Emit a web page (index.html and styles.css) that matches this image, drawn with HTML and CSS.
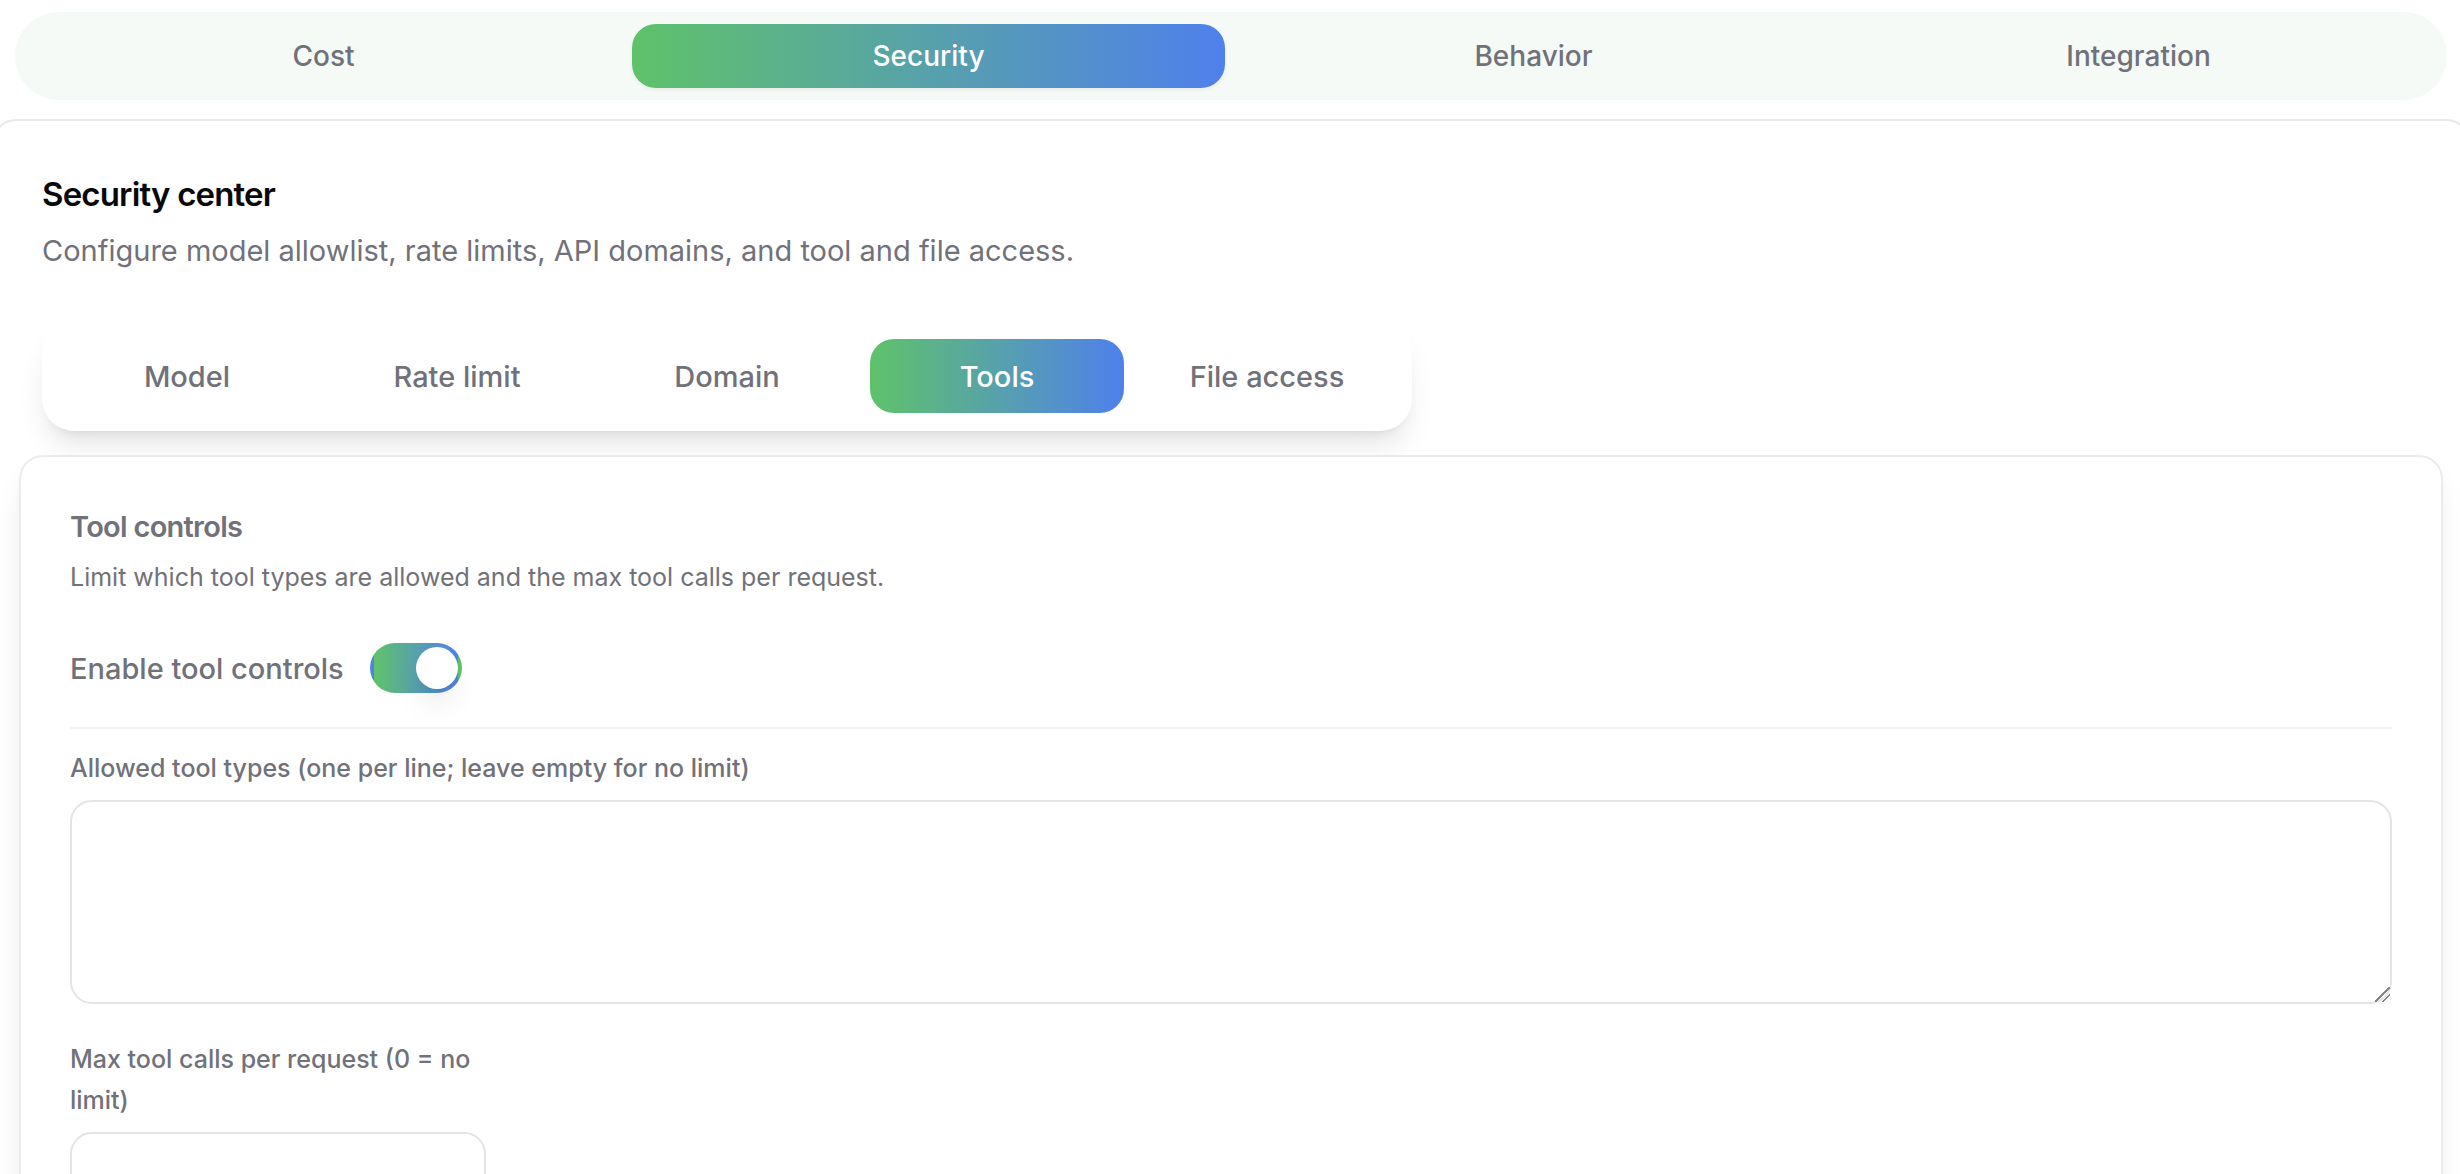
FILE: index.html
```html
<!DOCTYPE html>
<html lang="en">

<head>
    <meta charset="UTF-8">
    <meta name="viewport" content="width=device-width, initial-scale=1.0">
    <title>Settings - Security</title>
    <link rel="stylesheet" href="styles.css">
</head>

<body>
    <!-- Main tabs -->
    <nav class="main-tabs">
        <button type="button" class="tab">Cost</button>
        <button type="button" class="tab active">Security</button>
        <button type="button" class="tab">Behavior</button>
        <button type="button" class="tab">Integration</button>
    </nav>

    <!-- Security center -->
    <main class="panel">
        <header class="panel-header">
            <h1>Security center</h1>
            <p>Configure model allowlist, rate limits, API domains, and tool and file access.</p>
        </header>

        <nav class="sub-tabs">
            <button type="button" class="tab">Model</button>
            <button type="button" class="tab">Rate limit</button>
            <button type="button" class="tab">Domain</button>
            <button type="button" class="tab active">Tools</button>
            <button type="button" class="tab">File access</button>
        </nav>

        <section class="card">
            <h2>Tool controls</h2>
            <p class="card-text">Limit which tool types are allowed and the max tool calls per request.</p>

            <form id="toolControlsForm">
                <div class="switch-row">
                    <label for="enableTools">Enable tool controls</label>
                    <input type="checkbox" id="enableTools" name="enableTools" class="switch" role="switch" checked>
                </div>

                <div class="field">
                    <label for="toolTypes">Allowed tool types (one per line; leave empty for no limit)</label>
                    <textarea id="toolTypes" name="toolTypes"></textarea>
                </div>

                <div class="field field-small">
                    <label for="maxCalls">Max tool calls per request (0 = no limit)</label>
                    <input type="text" id="maxCalls" name="maxCalls" inputmode="numeric">
                </div>
            </form>
        </section>
    </main>
</body>

</html>
```
FILE: styles.css
```css
* {
    box-sizing: border-box;
}

body {
    margin: 0;
    padding-top: 12px;
    font-family: Inter, sans-serif;
    font-size: 29px;
    color: #71717a;
    background-color: #fff;
    overflow-x: hidden;
}

h1,
h2,
p {
    margin: 0;
}

/* Tabs */
.main-tabs {
    display: grid;
    grid-template-columns: repeat(4, 1fr);
    gap: 12px;
    margin: 0 13px 0 15px;
    padding: 12px;
    border-radius: 44px;
    background-color: #f5faf6;
}

.tab {
    height: 64px;
    padding: 0 24px;
    border: none;
    border-radius: 24px;
    background: none;
    color: #71717a;
    font-family: inherit;
    font-size: 28px;
    font-weight: 500;
    cursor: pointer;
}

.tab.active {
    background: linear-gradient(90deg, #5fc26a, #4f80ec);
    color: white;
    box-shadow: 0 2px 4px rgba(0, 0, 0, 0.06);
}

.sub-tabs {
    display: grid;
    grid-template-columns: repeat(5, 254px);
    gap: 16px;
    width: fit-content;
    margin-top: 48px;
    padding: 18px;
    border-radius: 32px;
    background-color: white;
    box-shadow: 0 20px 30px -6px rgba(0, 0, 0, 0.1), 0 8px 12px -8px rgba(0, 0, 0, 0.1);
}

.sub-tabs .tab {
    height: 74px;
    font-size: 29px;
}

.sub-tabs .tab.active {
    box-shadow: none;
}

/* Panel */
.panel {
    margin: 19px -10px 0 -8px;
    padding: 48px;
    border: 2px solid #e8e8ea;
    border-radius: 24px;
    background-color: white;
}

.panel-header h1 {
    color: #09090b;
    font-size: 33px;
    font-weight: 600;
    line-height: 50px;
    letter-spacing: -0.025em;
}

.panel-header p {
    margin-top: 10px;
    line-height: 44px;
}

/* Tool controls card */
.card {
    margin: 24px -23px 0;
    padding: 48px 49px;
    border: 2px solid #ebebed;
    border-radius: 24px;
    background-color: white;
    box-shadow: 0 20px 30px -6px rgba(0, 0, 0, 0.1), 0 8px 12px -8px rgba(0, 0, 0, 0.1);
}

.card h2 {
    font-size: 29px;
    font-weight: 600;
    line-height: 44px;
    letter-spacing: -0.025em;
}

.card-text {
    margin-top: 8px;
    font-size: 25px;
    line-height: 40px;
}

.switch-row {
    display: flex;
    align-items: center;
    gap: 26px;
    margin-top: 46px;
    padding-bottom: 34px;
    border-bottom: 2px solid #f2f2f3;
    font-weight: 500;
}

.switch {
    appearance: none;
    width: 92px;
    height: 50px;
    margin: 0;
    border: 4px solid transparent;
    border-radius: 25px;
    background: linear-gradient(90deg, #5fc26a, #4f80ec);
    cursor: pointer;
}

.switch::before {
    content: "";
    display: block;
    width: 42px;
    height: 42px;
    border-radius: 50%;
    background-color: white;
    box-shadow: 0 20px 30px -6px rgba(0, 0, 0, 0.1), 0 8px 12px -8px rgba(0, 0, 0, 0.1);
}

.switch:checked::before {
    margin-left: auto;
}

.field {
    display: flex;
    flex-direction: column;
    gap: 11px;
    margin-top: 19px;
}

.field-small {
    max-width: 416px;
    margin-top: 35px;
}

.field label {
    font-size: 25px;
    font-weight: 500;
    line-height: 41px;
}

.field textarea,
.field input {
    width: 100%;
    padding: 16px 24px;
    border: 2px solid #e4e4e7;
    border-radius: 22px;
    background-color: white;
    color: #09090b;
    font-family: inherit;
    font-size: 29px;
}

.field textarea {
    height: 204px;
    resize: vertical;
}

/* two diagonal grip lines */
.field textarea::-webkit-resizer {
    background: linear-gradient(135deg, transparent 46%, #858585 46% 54%, transparent 54% 71%, #858585 71% 79%, transparent 79%);
}

.field input {
    height: 82px;
}

.field textarea:focus,
.field input:focus {
    border-color: #5fc26a;
    outline: none;
}
```
